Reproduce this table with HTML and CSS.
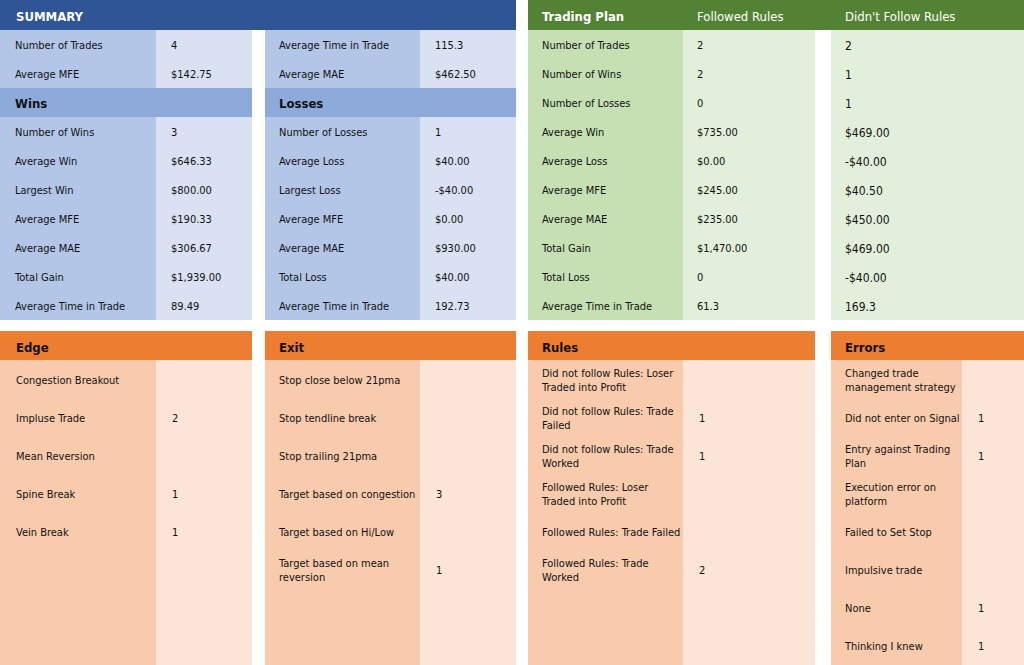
FILE: index.html
```html
<!DOCTYPE html>
<html lang="en">
<head>
<meta charset="utf-8">
<title>Trading Journal Summary</title>
<link rel="stylesheet" href="styles.css">
</head>
<body>
<div class="page">
  <div class="top">
    <section class="summary">
      <div class="sum-head">SUMMARY</div>
      <div class="sum-cols">
        <div class="sub sub-left">
          <div class="row"><span class="lab">Number of Trades</span><span class="val">4</span></div>
          <div class="row"><span class="lab">Average MFE</span><span class="val">$142.75</span></div>
          <div class="subhead">Wins</div>
          <div class="row"><span class="lab">Number of Wins</span><span class="val">3</span></div>
          <div class="row"><span class="lab">Average Win</span><span class="val">$646.33</span></div>
          <div class="row"><span class="lab">Largest Win</span><span class="val">$800.00</span></div>
          <div class="row"><span class="lab">Average MFE</span><span class="val">$190.33</span></div>
          <div class="row"><span class="lab">Average MAE</span><span class="val">$306.67</span></div>
          <div class="row"><span class="lab">Total Gain</span><span class="val">$1,939.00</span></div>
          <div class="row"><span class="lab">Average Time in Trade</span><span class="val">89.49</span></div>
        </div>
        <div class="sub sub-right">
          <div class="row"><span class="lab">Average Time in Trade</span><span class="val">115.3</span></div>
          <div class="row"><span class="lab">Average MAE</span><span class="val">$462.50</span></div>
          <div class="subhead">Losses</div>
          <div class="row"><span class="lab">Number of Losses</span><span class="val">1</span></div>
          <div class="row"><span class="lab">Average Loss</span><span class="val">$40.00</span></div>
          <div class="row"><span class="lab">Largest Loss</span><span class="val">-$40.00</span></div>
          <div class="row"><span class="lab">Average MFE</span><span class="val">$0.00</span></div>
          <div class="row"><span class="lab">Average MAE</span><span class="val">$930.00</span></div>
          <div class="row"><span class="lab">Total Loss</span><span class="val">$40.00</span></div>
          <div class="row"><span class="lab">Average Time in Trade</span><span class="val">192.73</span></div>
        </div>
      </div>
    </section>
    <section class="plan">
      <div class="plan-head">
        <span class="ph ph-title">Trading Plan</span>
        <span class="ph">Followed Rules</span>
        <span class="ph">Didn't Follow Rules</span>
      </div>
      <div class="plan-body">
        <div class="plan-main">
          <div class="prow"><span class="plab">Number of Trades</span><span class="pval">2</span></div>
          <div class="prow"><span class="plab">Number of Wins</span><span class="pval">2</span></div>
          <div class="prow"><span class="plab">Number of Losses</span><span class="pval">0</span></div>
          <div class="prow"><span class="plab">Average Win</span><span class="pval">$735.00</span></div>
          <div class="prow"><span class="plab">Average Loss</span><span class="pval">$0.00</span></div>
          <div class="prow"><span class="plab">Average MFE</span><span class="pval">$245.00</span></div>
          <div class="prow"><span class="plab">Average MAE</span><span class="pval">$235.00</span></div>
          <div class="prow"><span class="plab">Total Gain</span><span class="pval">$1,470.00</span></div>
          <div class="prow"><span class="plab">Total Loss</span><span class="pval">0</span></div>
          <div class="prow"><span class="plab">Average Time in Trade</span><span class="pval">61.3</span></div>
        </div>
        <div class="plan-alt">
          <div class="arow">2</div>
          <div class="arow">1</div>
          <div class="arow">1</div>
          <div class="arow">$469.00</div>
          <div class="arow">-$40.00</div>
          <div class="arow">$40.50</div>
          <div class="arow">$450.00</div>
          <div class="arow">$469.00</div>
          <div class="arow">-$40.00</div>
          <div class="arow">169.3</div>
        </div>
      </div>
    </section>
  </div>

  <div class="bottom">
    <section class="panel panel-edge">
      <div class="ohead">Edge</div>
      <div class="obody">
        <span class="olab">Congestion Breakout</span><span class="oval"></span>
        <span class="olab">Impluse Trade</span><span class="oval">2</span>
        <span class="olab">Mean Reversion</span><span class="oval"></span>
        <span class="olab">Spine Break</span><span class="oval">1</span>
        <span class="olab">Vein Break</span><span class="oval">1</span>
      </div>
    </section>
    <section class="panel panel-exit">
      <div class="ohead">Exit</div>
      <div class="obody">
        <span class="olab">Stop close below 21pma</span><span class="oval"></span>
        <span class="olab">Stop tendline break</span><span class="oval"></span>
        <span class="olab">Stop trailing 21pma</span><span class="oval"></span>
        <span class="olab">Target based on congestion</span><span class="oval">3</span>
        <span class="olab">Target based on Hi/Low</span><span class="oval"></span>
        <span class="olab">Target based on mean<br>reversion</span><span class="oval">1</span>
      </div>
    </section>
    <section class="panel panel-rules">
      <div class="ohead">Rules</div>
      <div class="obody">
        <span class="olab">Did not follow Rules: Loser<br>Traded into Profit</span><span class="oval"></span>
        <span class="olab">Did not follow Rules: Trade<br>Failed</span><span class="oval">1</span>
        <span class="olab">Did not follow Rules: Trade<br>Worked</span><span class="oval">1</span>
        <span class="olab">Followed Rules: Loser<br>Traded into Profit</span><span class="oval"></span>
        <span class="olab">Followed Rules: Trade Failed</span><span class="oval"></span>
        <span class="olab">Followed Rules: Trade<br>Worked</span><span class="oval">2</span>
      </div>
    </section>
    <section class="panel panel-errors">
      <div class="ohead">Errors</div>
      <div class="obody">
        <span class="olab">Changed trade<br>management strategy</span><span class="oval"></span>
        <span class="olab">Did not enter on Signal</span><span class="oval">1</span>
        <span class="olab">Entry against Trading<br>Plan</span><span class="oval">1</span>
        <span class="olab">Execution error on<br>platform</span><span class="oval"></span>
        <span class="olab">Failed to Set Stop</span><span class="oval"></span>
        <span class="olab">Impulsive trade</span><span class="oval"></span>
        <span class="olab">None</span><span class="oval">1</span>
        <span class="olab">Thinking I knew</span><span class="oval">1</span>
      </div>
    </section>
  </div>
</div>
</body>
</html>
```

FILE: styles.css
```css
* { box-sizing: border-box; }

body {
  margin: 0;
  background: #ffffff;
  font-family: "DejaVu Sans Condensed", "DejaVu Sans", sans-serif;
  font-size: 11px;
  color: #111111;
}

.page {
  width: 1024px;
  height: 665px;
  overflow: hidden;
}

/* ---------- top area ---------- */
.top {
  display: flex;
  gap: 12px;
  height: 320px;
}

.summary { width: 516px; }

.sum-head {
  height: 30px;
  background: #2f5597;
  color: #ffffff;
  font-weight: bold;
  font-size: 13px;
  display: flex;
  align-items: center;
  padding-left: 16px;
  padding-top: 2px;
}

.sum-cols {
  display: flex;
  gap: 13px;
}

.sub-left { width: 252px; --lw: 156px; }
.sub-right { width: 251px; --lw: 155px; }

.row {
  display: grid;
  grid-template-columns: var(--lw) 1fr;
  height: 29px;
}

.lab, .val, .plab, .pval, .arow {
  display: flex;
  align-items: center;
  white-space: nowrap;
  padding-top: 2px;
}

.lab {
  background: #b4c6e7;
  padding-left: 15px;
}

.sub-right .lab { padding-left: 14px; }

.val {
  background: #d9e1f2;
  padding-left: 15px;
}

.subhead {
  height: 29px;
  background: #8eaadb;
  font-weight: bold;
  font-size: 13px;
  display: flex;
  align-items: center;
  padding-left: 15px;
  padding-top: 2px;
}

.sub-right .subhead { padding-left: 14px; }

/* ---------- trading plan ---------- */
.plan { width: 496px; }

.plan-head {
  height: 30px;
  background: #548235;
  color: #ffffff;
  font-size: 13px;
  display: grid;
  grid-template-columns: 155px 148px 193px;
}

.ph {
  display: flex;
  align-items: center;
  padding-left: 14px;
  padding-top: 2px;
  white-space: nowrap;
}

.ph-title { font-weight: bold; }

.plan-body {
  display: flex;
  gap: 16px;
}

.plan-main { width: 287px; }

.prow {
  display: grid;
  grid-template-columns: 155px 132px;
  height: 29px;
}

.plab {
  background: #c6e0b4;
  padding-left: 14px;
}

.pval {
  background: #e2efda;
  padding-left: 14px;
}

.plan-alt {
  width: 193px;
  background: #e2efda;
}

.arow {
  height: 29px;
  padding-left: 14px;
  font-size: 12px;
}

/* ---------- bottom panels ---------- */
.bottom {
  display: flex;
  margin-top: 11px;
  height: 334px;
}

.panel {
  display: flex;
  flex-direction: column;
}

.panel-edge { width: 252px; --lw: 156px; }
.panel-exit { width: 251px; --lw: 155px; margin-left: 13px; }
.panel-rules { width: 287px; --lw: 155px; margin-left: 12px; }
.panel-errors { width: 193px; --lw: 131px; margin-left: 16px; }

.ohead {
  height: 29px;
  flex: none;
  background: #ed7d31;
  color: #111111;
  font-weight: bold;
  font-size: 13px;
  display: flex;
  align-items: center;
  padding-left: 14px;
  padding-top: 3px;
}

.panel-edge .ohead { padding-left: 16px; }

.obody {
  flex: 1;
  display: grid;
  grid-template-columns: var(--lw) 1fr;
  grid-auto-rows: 38px;
  align-content: start;
  background: linear-gradient(to right, #f8cbad var(--lw), #fce4d6 var(--lw));
}

.olab, .oval {
  display: flex;
  align-items: center;
  white-space: nowrap;
  line-height: 14px;
  padding-top: 4px;
}

.olab { padding-left: 14px; }
.panel-edge .olab { padding-left: 16px; }

.oval { padding-left: 16px; }
```
